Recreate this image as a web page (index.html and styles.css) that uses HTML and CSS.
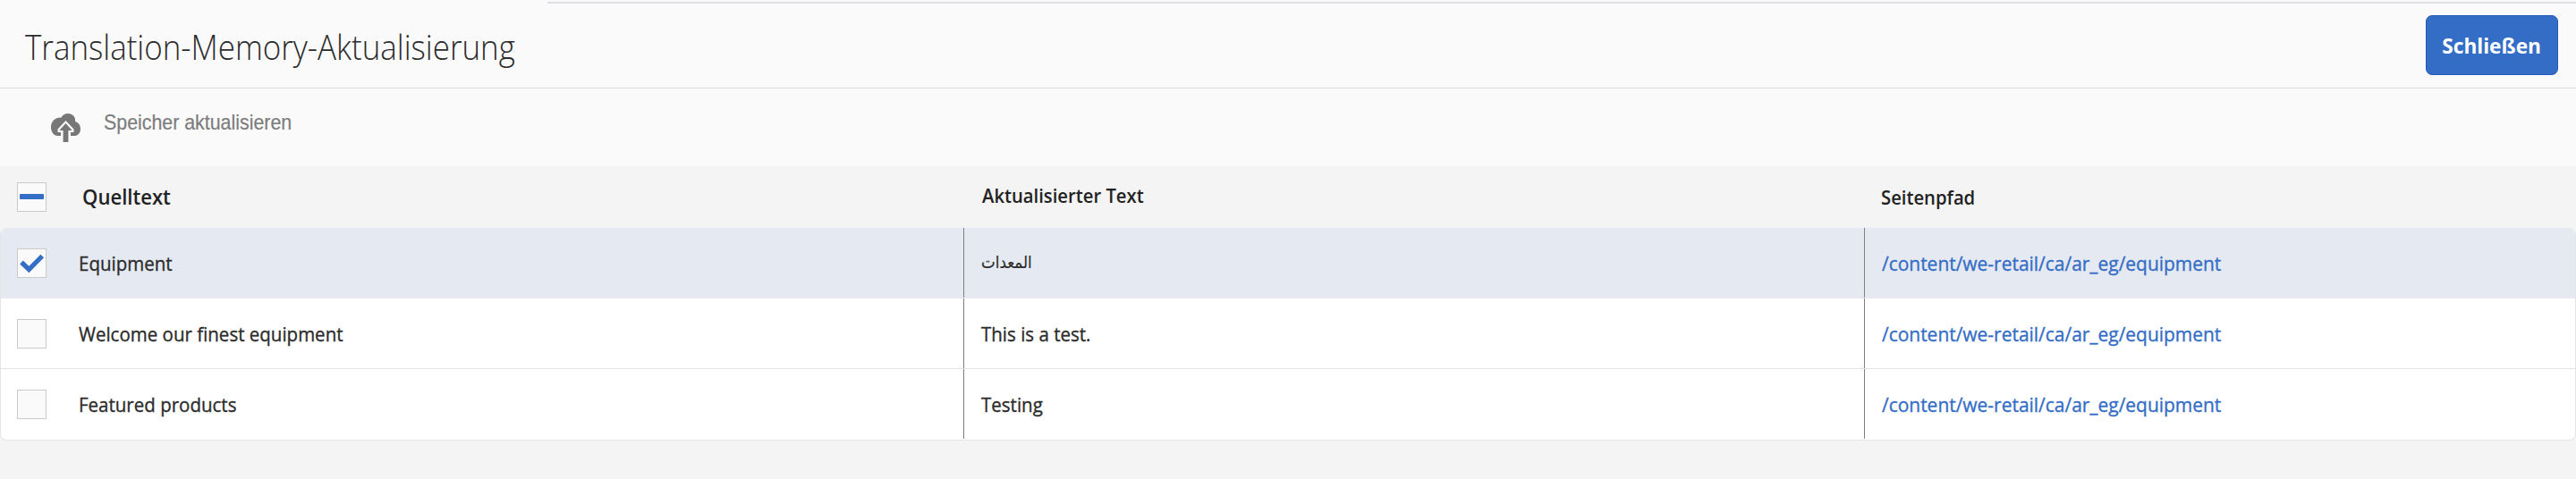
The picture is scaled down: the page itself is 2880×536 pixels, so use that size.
FILE: index.html
```html
<!DOCTYPE html>
<html lang="de">
<head>
<meta charset="utf-8">
<title>Translation-Memory-Aktualisierung</title>
<link rel="stylesheet" href="styles.css">
</head>
<body>
<header class="titlebar">
  <div class="topline"></div>
  <div class="titlebar-content">
    <h1 class="title">Translation-Memory-Aktualisierung</h1>
    <button class="close"><span class="close-label">Schließen</span></button>
  </div>
</header>
<div class="actionbar">
  <svg class="cloud" viewBox="0 0 33 32" width="33" height="32">
    <path fill="#777" d="M7.500 25C3.300 25 0 21 0 15.300C0 9 4.500 4.300 11.500 4.500C13 1.500 15.700 0 19 0C24 0 27.500 3.700 27.200 9C31 10.300 33 13.300 33 17.200C33 21.800 30 25 26 25H22V21H25.500V17.500L16.500 8L7.500 17.500V21H11V25Z"/>
    <path fill="#777" d="M16.500 11L23.700 19H19.400V32H13.600V19H9.300Z"/>
  </svg>
  <span class="action-label">Speicher aktualisieren</span>
</div>
<main class="table">
  <div class="row head">
    <div class="cell check"><span class="box"><svg width="31" height="31" viewBox="0 0 31 31"><rect x="2" y="12" width="27" height="6" rx="1" fill="#346dc6"/></svg></span></div>
    <div class="cell source"><span class="text">Quelltext</span></div>
    <div class="cell updated"><span class="text">Aktualisierter Text</span></div>
    <div class="cell path"><span class="text">Seitenpfad</span></div>
  </div>
  <div class="body">
    <div class="row selected">
      <div class="cell check"><span class="box"><svg width="31" height="31" viewBox="0 0 31 31"><path d="M4 14.500L12.400 22.500L27.200 7.500" fill="none" stroke="#346dc6" stroke-width="5.200"/></svg></span></div>
      <div class="cell source"><span class="text">Equipment</span></div>
      <div class="cell updated"><span class="arabic" lang="ar" dir="rtl">المعدات</span></div>
      <div class="cell path"><a class="text link">/content/we-retail/ca/ar_eg/equipment</a></div>
    </div>
    <div class="row">
      <div class="cell check"><span class="box"></span></div>
      <div class="cell source"><span class="text">Welcome our finest equipment</span></div>
      <div class="cell updated"><span class="text">This is a test.</span></div>
      <div class="cell path"><a class="text link">/content/we-retail/ca/ar_eg/equipment</a></div>
    </div>
    <div class="row">
      <div class="cell check"><span class="box"></span></div>
      <div class="cell source"><span class="text">Featured products</span></div>
      <div class="cell updated"><span class="text">Testing</span></div>
      <div class="cell path"><a class="text link">/content/we-retail/ca/ar_eg/equipment</a></div>
    </div>
  </div>
</main>
</body>
</html>
```
FILE: styles.css
```css
* { box-sizing: border-box; }
body {
  margin: 0;
  min-height: 536px;
  background: #f4f4f4;
  color: #2c2c2c;
  font-family: "Open Sans", "Noto Sans", sans-serif;
  font-size: 22px;
}
.titlebar {
  height: 99px;
  background: #fafafa;
  border-bottom: 1px solid #dcdcdc;
}
.topline {
  height: 4px;
  margin-left: 612px;
  border-top: 2px solid #fafafa;
  border-bottom: 2px solid #dfe0e4;
}
.titlebar-content {
  display: flex;
  justify-content: space-between;
  align-items: flex-start;
  padding: 13px 20px 0 28px;
}
.title {
  margin: 9px 0 0;
  font-size: 38px;
  font-weight: 300;
  line-height: 52px;
  white-space: nowrap;
  transform: scaleX(0.919);
  transform-origin: left;
}
.close {
  width: 148px;
  height: 67px;
  padding: 0;
  border: 1px solid #2159bb;
  border-radius: 7px;
  background: #346dc6;
  color: #fff;
  font: 700 24px "Open Sans", sans-serif;
}
.close-label {
  display: inline-block;
  transform: scaleX(0.945);
}
.actionbar {
  display: flex;
  align-items: flex-start;
  height: 87px;
  padding: 28px 0 0 57px;
  background: #fafafa;
}
.cloud { display: block; }
.action-label {
  margin: -4px 0 0 26px;
  color: #7c7c7c;
  font: 24px/28px "Liberation Sans", Arial, sans-serif;
  white-space: nowrap;
  transform: scaleX(0.89);
  transform-origin: left;
  -webkit-text-stroke: 0.2px;
}
.row {
  display: grid;
  grid-template-columns: 88px 988px 1007px 1fr;
  height: 79px;
  border-bottom: 1px solid #e3e3e3;
}
.cell {
  display: flex;
  align-items: center;
  white-space: nowrap;
}
.check { padding-left: 18px; }
.box {
  width: 33px;
  height: 33px;
  border: 1px solid #cacaca;
  background: #fafafa;
}
.box svg { display: block; }
.text {
  transform: scaleX(0.932);
  transform-origin: left;
}
.body .text { -webkit-text-stroke: 0.35px; }
.body .source .text { margin-left: -1px; }
.body .updated, .body .path { border-left: 1px solid #7d8084; }
.updated { padding-left: 19px; }
.path { padding-left: 19px; }
.path .link {
  color: #346dc6;
  transform: scaleX(0.952);
}
.head {
  height: 69px;
  padding: 0 1px;
  border-bottom: 0;
  color: #222;
  font-weight: 600;
}
.head .text { transform: scaleX(0.92); }
.head .source {
  padding: 0 0 2px 3px;
  font-size: 24px;
}
.head .updated { padding: 0 0 5px 21px; }
.head .path { padding: 0 0 1px 19px; }
.body {
  height: 238px;
  border: 1px solid #e3e5e8;
  border-top: 0;
  border-radius: 8px;
  background: #fff;
  overflow: hidden;
}
.body .row:last-child {
  border-bottom: 0;
  padding-bottom: 1px;
}
.selected {
  background: #e5e9f1;
  border-bottom-color: #e5e8ee;
}
.arabic {
  padding-bottom: 3px;
  font: 19px "DejaVu Sans", sans-serif;
  transform: scaleX(0.88);
  transform-origin: left;
  -webkit-text-stroke: 0.2px;
}
```
